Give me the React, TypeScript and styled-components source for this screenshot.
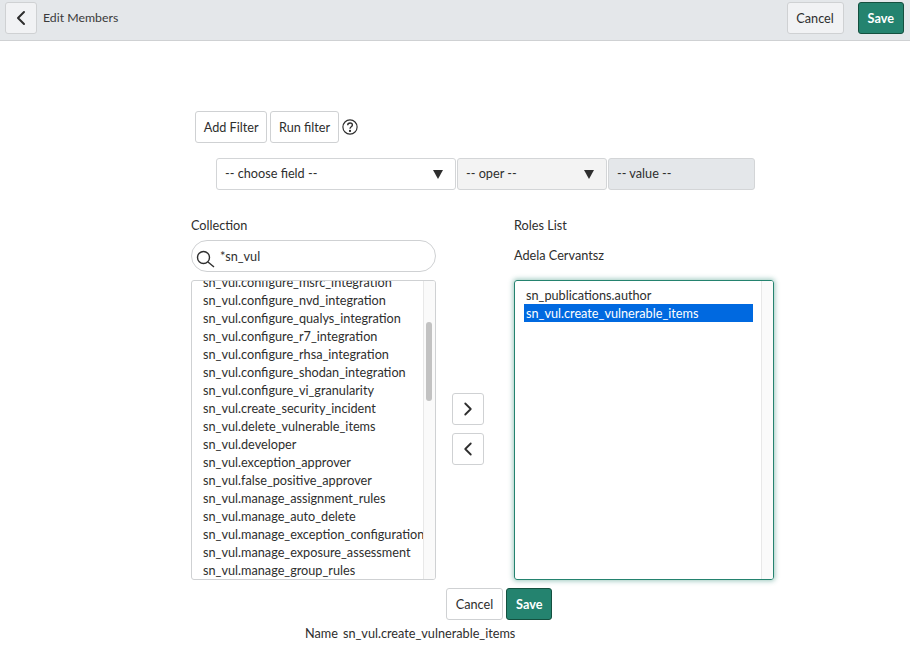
import React from 'react';
import styled, { createGlobalStyle } from 'styled-components';
import { ChevronLeft, ChevronRight } from 'lucide-react';

const GlobalStyle = createGlobalStyle`
  html, body {
    margin: 0;
    padding: 0;
    background: #fff;
    color: #2e2e2e;
    font-family: "Lato", "Noto Sans", sans-serif;
    font-size: 12.7px;
  }
`;

const TopBar = styled.header`
  height: 38px;
  background: #e4e7ea;
  border-bottom: 1px solid #cfd1d3;
  display: flex;
  align-items: flex-start;
  padding: 2px 6px 0 5px;
`;

const Title = styled.span`
  margin-left: 6px;
  line-height: 31px;
  font-size: 12.3px;
  color: #3a3a3a;
`;

const Spacer = styled.div`
  flex: 1;
`;

const TopActions = styled.div`
  display: flex;
  gap: 14px;
`;

const Button = styled.button<{ $primary?: boolean; $muted?: boolean }>`
  height: 32px;
  min-width: ${(p) => (p.$primary ? 46 : 57)}px;
  box-sizing: border-box;
  padding: 0 ${(p) => (p.$primary ? 9 : 7.7)}px;
  border-radius: 3px;
  font-family: inherit;
  font-size: 12.7px;
  font-weight: ${(p) => (p.$primary ? 700 : 400)};
  color: ${(p) => (p.$primary ? '#fff' : '#2e2e2e')};
  background: ${(p) => (p.$primary ? '#24836f' : p.$muted ? '#f1f2f4' : '#fff')};
  border: 1px solid ${(p) => (p.$primary ? '#14503f' : '#cfd1d3')};
`;

const IconButton = styled(Button)`
  width: 32px;
  min-width: 0;
  padding: 0;
  display: flex;
  align-items: center;
  justify-content: center;
`;

const Page = styled.main`
  padding: 70px 0 0 191px;
`;

const FilterButtons = styled.div`
  display: flex;
  align-items: center;
  gap: 3px;
  margin-left: 4px;
`;

const FilterFields = styled.div`
  display: flex;
  gap: 1px;
  margin: 15px 0 0 25px;
`;

const Field = styled.div<{ $width: number; $bg: string }>`
  width: ${(p) => p.$width}px;
  height: 32px;
  box-sizing: border-box;
  background: ${(p) => p.$bg};
  border: 1px solid #d3d5d7;
  border-radius: 3px;
  display: flex;
  align-items: center;
  justify-content: space-between;
  padding: 0 12px 2px 8px;
`;

const Caret = styled.span`
  width: 0;
  height: 0;
  margin-top: 2px;
  border-left: 5.5px solid transparent;
  border-right: 5.5px solid transparent;
  border-top: 9px solid #2e2e2e;
`;

const Bucket = styled.div`
  display: grid;
  grid-template-columns: 245px 78px 260px;
  margin-top: 26px;
`;

const Label = styled.div`
  height: 18px;
  line-height: 18px;
`;

const Owner = styled(Label)`
  margin-top: 9px;
  height: 24px;
  line-height: 24px;
`;

const Search = styled.div`
  margin-top: 6px;
  height: 32px;
  box-sizing: border-box;
  border: 1px solid #cfd1d3;
  border-radius: 16px;
  display: flex;
  align-items: center;
  gap: 2px;
  padding: 0 0 1px 4px;
`;

const ListBox = styled.div`
  margin-top: 8px;
  height: 300px;
  box-sizing: border-box;
  border: 1px solid #cfd1d3;
  border-radius: 3px;
  display: flex;
  overflow: hidden;
`;

const SelectedBox = styled(ListBox)`
  margin-top: 13px;
  border-color: #24836f;
  box-shadow: 0 0 5px 1px rgba(36, 131, 111, 0.45);
`;

const Rows = styled.div<{ $inset?: boolean }>`
  flex: 1;
  min-width: 0;
  padding: ${(p) => (p.$inset ? '5px 8px 0 9px' : '0 0 0 9px')};
  margin-top: ${(p) => (p.$inset ? '0' : '-8px')};
  white-space: nowrap;
`;

const Row = styled.div<{ $selected?: boolean }>`
  height: 18px;
  line-height: 18px;
  padding-left: 2px;
  color: ${(p) => (p.$selected ? '#fff' : 'inherit')};
  background: ${(p) => (p.$selected ? '#0069e0' : 'transparent')};
`;

const Track = styled.div`
  width: 12px;
  flex: none;
  background: #fafafa;
  border-left: 1px solid #e8e8e8;
  padding-top: 41px;
  box-sizing: border-box;
`;

const Thumb = styled.div`
  width: 6px;
  height: 79px;
  margin-left: 2px;
  border-radius: 3px;
  background: #c2c2c2;
`;

const Movers = styled.div`
  display: flex;
  flex-direction: column;
  align-items: center;
  gap: 8px;
  padding: 177px 14px 0 0;
`;

const Actions = styled.div`
  display: flex;
  gap: 3px;
  margin: 8px 0 0 255px;
`;

const NameLine = styled.div`
  margin: 4px 0 0 114px;
  display: flex;
  gap: 5px;
  line-height: 18px;
`;

const available = [
  'sn_vul.configure_msrc_integration',
  'sn_vul.configure_nvd_integration',
  'sn_vul.configure_qualys_integration',
  'sn_vul.configure_r7_integration',
  'sn_vul.configure_rhsa_integration',
  'sn_vul.configure_shodan_integration',
  'sn_vul.configure_vi_granularity',
  'sn_vul.create_security_incident',
  'sn_vul.delete_vulnerable_items',
  'sn_vul.developer',
  'sn_vul.exception_approver',
  'sn_vul.false_positive_approver',
  'sn_vul.manage_assignment_rules',
  'sn_vul.manage_auto_delete',
  'sn_vul.manage_exception_configuration',
  'sn_vul.manage_exposure_assessment',
  'sn_vul.manage_group_rules',
];

const HelpIcon = () => (
  <svg width="16" height="16" viewBox="0 0 18 18" fill="none" stroke="#2e2e2e" strokeWidth="1.3">
    <circle cx="9" cy="9" r="8" />
    <path d="M6.4 7c0-1.5 1.1-2.5 2.7-2.5s2.6 1 2.6 2.2c0 2-2.7 2-2.7 4.2" strokeWidth="1.5" />
    <circle cx="9" cy="13.4" r=".6" fill="#2e2e2e" />
  </svg>
);

const SearchIcon = () => (
  <svg width="22" height="24" viewBox="0 0 22 24" fill="none" stroke="#2e2e2e" strokeWidth="1.4">
    <circle cx="7.5" cy="13.5" r="6" />
    <path d="M12 18l6 5" />
  </svg>
);

const App = () => {
  return (
    <>
      <GlobalStyle />
      <TopBar>
        <IconButton $muted>
          <ChevronLeft size={24} color="#2e2e2e" strokeWidth={2} />
        </IconButton>
        <Title>Edit Members</Title>
        <Spacer />
        <TopActions>
          <Button $muted>Cancel</Button>
          <Button $primary>Save</Button>
        </TopActions>
      </TopBar>
      <Page>
        <FilterButtons>
          <Button>Add Filter</Button>
          <Button>Run filter</Button>
          <HelpIcon />
        </FilterButtons>
        <FilterFields>
          <Field $width={240} $bg="#fff">
            -- choose field --
            <Caret />
          </Field>
          <Field $width={150} $bg="#f3f3f3">
            -- oper --
            <Caret />
          </Field>
          <Field $width={147} $bg="#e4e7ea">-- value --</Field>
        </FilterFields>
        <Bucket>
          <div>
            <Label>Collection</Label>
            <Search>
              <SearchIcon />
              *sn_vul
            </Search>
            <ListBox>
              <Rows>
                {available.map((role) => (
                  <Row key={role}>{role}</Row>
                ))}
              </Rows>
              <Track>
                <Thumb />
              </Track>
            </ListBox>
          </div>
          <Movers>
            <IconButton>
              <ChevronRight size={22} color="#2e2e2e" strokeWidth={2} />
            </IconButton>
            <IconButton>
              <ChevronLeft size={22} color="#2e2e2e" strokeWidth={2} />
            </IconButton>
          </Movers>
          <div>
            <Label>Roles List</Label>
            <Owner>Adela Cervantsz</Owner>
            <SelectedBox>
              <Rows $inset>
                <Row>sn_publications.author</Row>
                <Row $selected>sn_vul.create_vulnerable_items</Row>
              </Rows>
              <Track />
            </SelectedBox>
          </div>
        </Bucket>
        <Actions>
          <Button>Cancel</Button>
          <Button $primary>Save</Button>
        </Actions>
        <NameLine>
          <span>Name</span>
          <span>sn_vul.create_vulnerable_items</span>
        </NameLine>
      </Page>
    </>
  );
};

export default App;
